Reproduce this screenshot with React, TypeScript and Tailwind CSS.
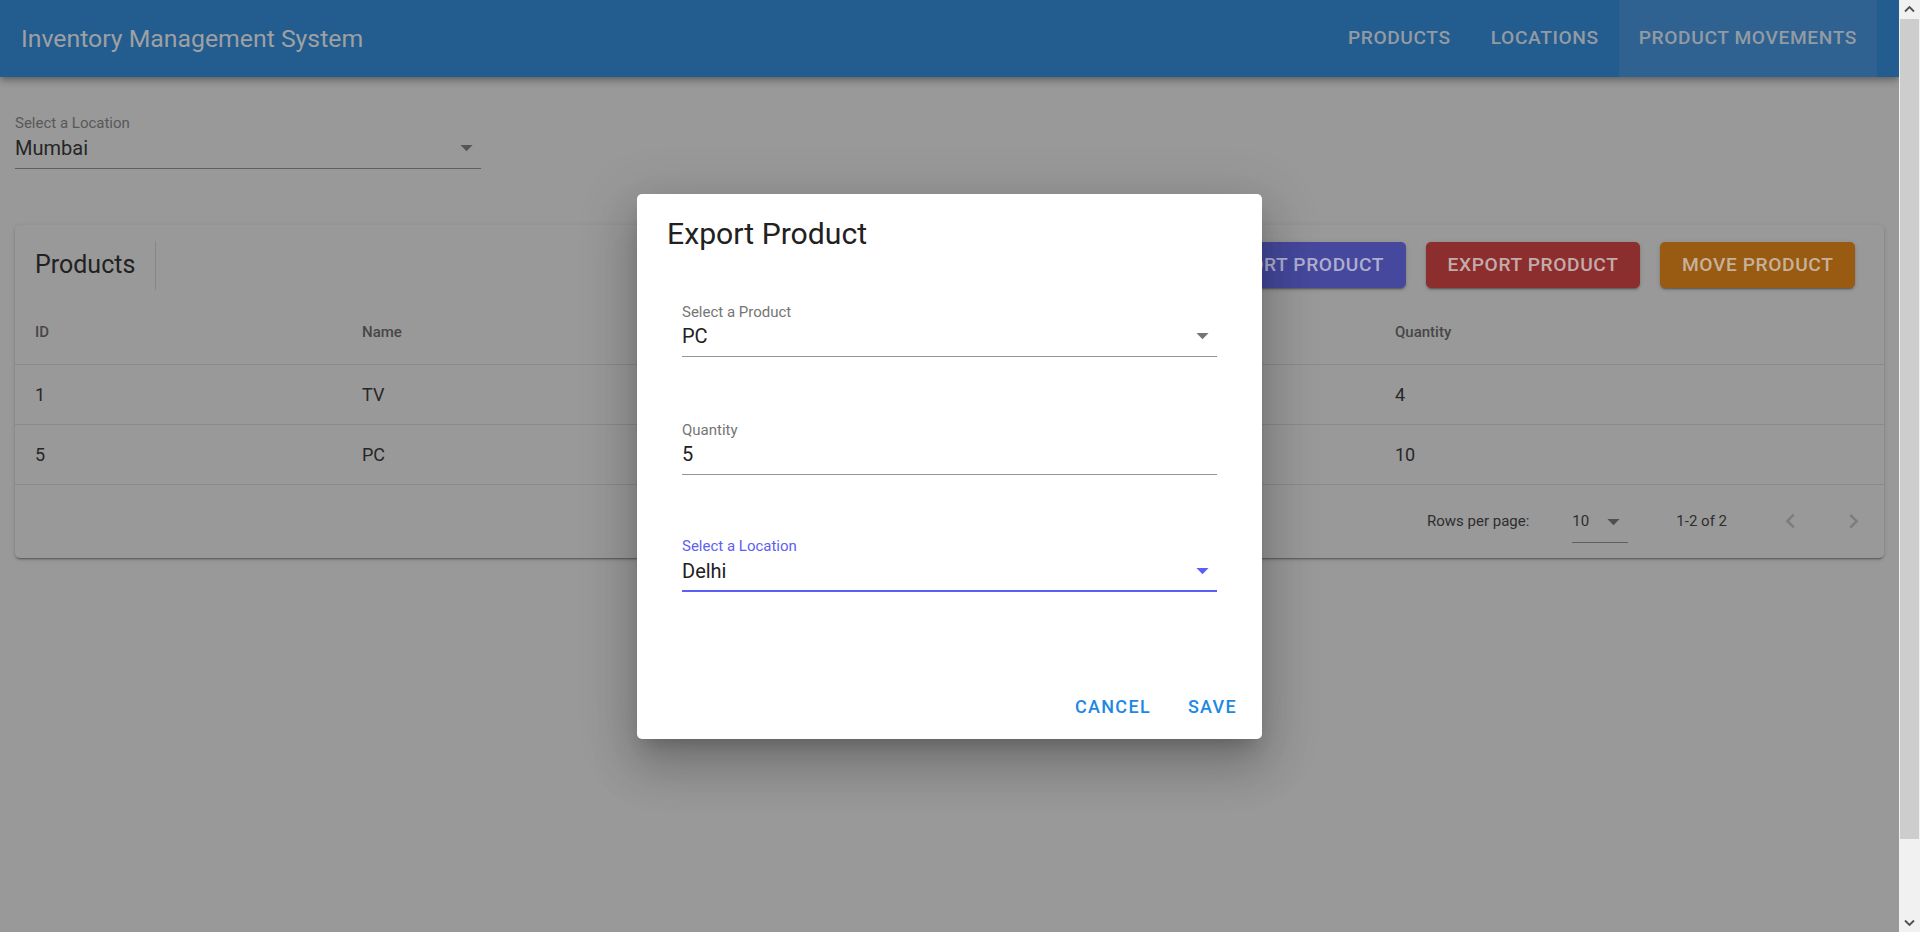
import React from "react";

function Caret({ className }: { className: string }) {
  return (
    <svg viewBox="0 0 24 24" className={className}>
      <path d="M7 10l5 5 5-5z" />
    </svg>
  );
}

type FieldProps = {
  label: string;
  value: string;
  labelCls: string;
  valueCls: string;
  lineCls: string;
  caretCls?: string;
  className?: string;
};

function Field({ label, value, labelCls, valueCls, lineCls, caretCls, className }: FieldProps) {
  return (
    <div className={`flex flex-col ${className ?? ""}`}>
      <div className={`h-[17px] text-[15px] leading-[17px] ${labelCls}`}>{label}</div>
      <div className="relative mt-[4.5px] flex h-[31px]">
        <span className={`text-[20px] leading-[23px] ${valueCls}`}>{value}</span>
        {caretCls && <Caret className={`absolute right-0 top-[-4px] h-[29px] w-[29px] ${caretCls}`} />}
      </div>
      <div className={lineCls} />
    </div>
  );
}

const navItems = [
  { label: "Products", active: false },
  { label: "Locations", active: false },
  { label: "Product Movements", active: true },
];

const rows = [
  { id: "1", name: "TV", qty: "4" },
  { id: "5", name: "PC", qty: "10" },
];

const btnShadow =
  "shadow-[0_3px_1px_-2px_rgba(0,0,0,0.2),0_2px_2px_0_rgba(0,0,0,0.14),0_1px_5px_0_rgba(0,0,0,0.12)]";

export default function App() {
  return (
    <div className="flex h-[932px] w-[1920px] overflow-hidden font-['Roboto',_'Liberation_Sans',_sans-serif]">
      <div className="relative h-[932px] w-[1899px] overflow-hidden bg-[#999999]">
        {/* App bar */}
        <header className="relative z-10 flex h-[77px] items-center bg-[#235c8e] pl-[21px] pr-[22px] shadow-[0_2px_5px_-1px_rgba(0,0,0,0.2),0_5px_6px_0_rgba(0,0,0,0.14),0_1px_12px_0_rgba(0,0,0,0.12)]">
          <div className="flex-1 text-[24.8px] text-[#9ea0a3]">Inventory Management System</div>
          <nav className="flex h-full">
            {navItems.map((n) => (
              <div
                key={n.label}
                className={`flex h-full items-center px-[20px] text-[19.2px] font-medium uppercase tracking-[0.6px] text-[#929ba4] ${
                  n.active ? "bg-[#2f6291]" : ""
                }`}
              >
                {n.label}
              </div>
            ))}
          </nav>
        </header>

        {/* Location selector */}
        <div className="px-[15px] pt-[38px]">
          <Field
            className="w-[466px]"
            label="Select a Location"
            value="Mumbai"
            labelCls="text-[#585858]"
            valueCls="text-[#262626]"
            lineCls="h-px bg-[#5f5f5f]"
            caretCls="fill-[#555555]"
          />
        </div>

        {/* Products card */}
        <div className={`mx-[15px] mt-[56.5px] rounded-[5px] bg-[#999999] ${btnShadow}`}>
          <div className="flex h-[80px] items-center pl-[20px] pr-[29px]">
            <div className="flex h-[49px] items-center border-r border-[#868686] pr-[20px] text-[25px] text-[#222222]">
              Products
            </div>
            <div className="ml-auto flex gap-[20.5px]">
              <button className={`h-[46px] rounded-[5px] bg-[#45489c] px-[21.5px] text-[19.2px] font-medium uppercase tracking-[0.6px] text-[#aeafd0] ${btnShadow}`}>
                Import Product
              </button>
              <button className={`h-[46px] rounded-[5px] bg-[#8d2e2e] px-[21.5px] text-[19.2px] font-medium uppercase tracking-[0.6px] text-[#c2abab] ${btnShadow}`}>
                Export Product
              </button>
              <button className={`h-[46px] rounded-[5px] bg-[#995a11] px-[21.5px] text-[19.2px] font-medium uppercase tracking-[0.6px] text-[#c6b29b] ${btnShadow}`}>
                Move Product
              </button>
            </div>
          </div>

          <div className="grid h-[60px] grid-cols-[327px_1033px_1fr] items-center border-b border-[#8a8a8a] pb-[4px] text-[15px] font-medium text-[#474747]">
            <div className="pl-[20px]">ID</div>
            <div className="pl-[20px]">Name</div>
            <div className="pl-[20px]">Quantity</div>
          </div>
          {rows.map((r) => (
            <div
              key={r.id}
              className="grid h-[60px] grid-cols-[327px_1033px_1fr] items-center border-b border-[#8a8a8a] text-[18px] text-[#272727]"
            >
              <div className="pl-[20px]">{r.id}</div>
              <div className="pl-[20px]">{r.name}</div>
              <div className="pl-[20px]">{r.qty}</div>
            </div>
          ))}

          <div className="flex h-[73px] items-center justify-end pr-[2px] text-[15px] text-[#2e2e2e]">
            <span className="leading-[17px]">Rows per page:</span>
            <div className="relative ml-[43px] w-[56px] border-b border-[#5f5f5f] pb-[11.5px] pt-[12.5px] leading-[17px]">
              <span>10</span>
              <Caret className="absolute right-0 top-[6px] h-[29px] w-[29px] fill-[#4f4f4f]" />
            </div>
            <span className="ml-[48px] leading-[17px]">1-2 of 2</span>
            <div className="ml-[34px] flex h-[58px] w-[58px] items-center justify-center">
              <svg viewBox="0 0 24 24" className="h-[29px] w-[29px] fill-[#7c7c7c]">
                <path d="M15.41 16.09l-4.58-4.59 4.58-4.59L14 5.5l-6 6 6 6z" />
              </svg>
            </div>
            <div className="ml-[5px] flex h-[58px] w-[58px] items-center justify-center">
              <svg viewBox="0 0 24 24" className="h-[29px] w-[29px] fill-[#7c7c7c]">
                <path d="M8.59 16.34l4.58-4.59-4.58-4.59L10 5.75l6 6-6 6z" />
              </svg>
            </div>
          </div>
        </div>

        {/* Dialog */}
        <div className="absolute inset-0 z-20 flex items-center justify-center">
          <div className="flex h-[545px] w-[625px] flex-col rounded-[5px] bg-white shadow-[0_13px_18px_-8px_rgba(0,0,0,0.2),0_29px_46px_4px_rgba(0,0,0,0.14),0_11px_55px_10px_rgba(0,0,0,0.12)]">
            <div className="pl-[30px] pt-[22px] text-[30.2px] leading-[36px] text-[#212121]">Export Product</div>
            <div className="mt-[52.3px] flex flex-col px-[45px]">
              <Field
                label="Select a Product"
                value="PC"
                labelCls="text-[#757575]"
                valueCls="text-[#212121]"
                lineCls="h-px bg-[#949494]"
                caretCls="fill-[#757575]"
              />
              <Field
                className="mt-[64.7px]"
                label="Quantity"
                value="5"
                labelCls="text-[#757575]"
                valueCls="text-[#212121]"
                lineCls="h-px bg-[#949494]"
              />
              <Field
                className="mt-[63px]"
                label="Select a Location"
                value="Delhi"
                labelCls="text-[#5d60f3]"
                valueCls="text-[#212121]"
                lineCls="-mt-px h-[2px] bg-[#5b5ff5]"
                caretCls="fill-[#5b5ff5]"
              />
            </div>
            <div className="mt-auto flex justify-end gap-[17px] pb-[11px] pr-[15px]">
              <button className="h-[43px] px-[10px] text-[18px] font-medium uppercase leading-[43px] tracking-[1.3px] text-[#1e88e5]">
                Cancel
              </button>
              <button className="h-[43px] px-[10px] text-[18px] font-medium uppercase leading-[43px] tracking-[1.3px] text-[#1e88e5]">
                Save
              </button>
            </div>
          </div>
        </div>
      </div>

      {/* Scrollbar */}
      <div className="flex h-[932px] w-[21px] flex-col bg-[#f1f1f1]">
        <div className="flex h-[19px] items-center justify-center">
          <svg viewBox="0 0 21 19" className="h-[19px] w-[21px]">
            <polyline points="6,11.5 10.5,7 15,11.5" fill="none" stroke="#505050" strokeWidth="1.8" />
          </svg>
        </div>
        <div className="mx-[1px] h-[820px] bg-[#cdcdcd]" />
        <div className="flex-1" />
        <div className="flex h-[19px] items-center justify-center">
          <svg viewBox="0 0 21 19" className="h-[19px] w-[21px]">
            <polyline points="6,7.5 10.5,12 15,7.5" fill="none" stroke="#505050" strokeWidth="1.8" />
          </svg>
        </div>
      </div>
    </div>
  );
}
